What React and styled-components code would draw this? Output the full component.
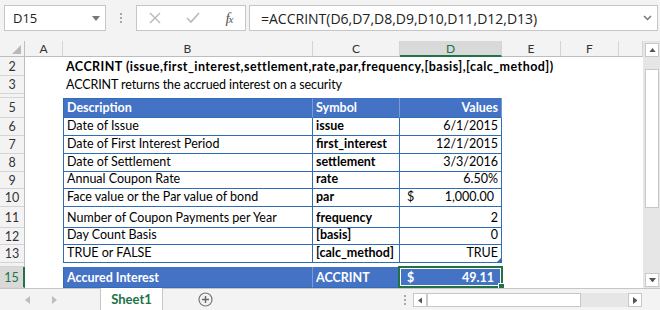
import styled, { createGlobalStyle } from 'styled-components'

const GREEN = '#217346'
const BLUE = '#4472c4'
const LINE = '#2f6db8'

const GlobalStyle = createGlobalStyle`
  html, body { margin: 0; padding: 0; background: #fff; }
  body { font-family: Lato, 'Liberation Sans', sans-serif; }
`

const Window = styled.div`
  width: 660px;
  height: 310px;
  overflow: hidden;
  display: flex;
  flex-direction: column;
  background: #f3f3f3;
`

/* ---------- formula bar ---------- */

const FormulaBar = styled.div`
  height: 41px;
  flex: none;
  display: flex;
  align-items: flex-start;
  box-sizing: border-box;
  padding: 5px 2px 0 4px;
`

const Box = styled.div`
  height: 26px;
  box-sizing: border-box;
  border: 1px solid #c6c6c6;
  background: #fff;
  display: flex;
  align-items: center;
`

const NameBox = styled(Box)`
  width: 102px;
  justify-content: space-between;
  padding: 0 5px 0 8px;
  font: 13px 'Open Sans', sans-serif;
  color: #222;
`

const Splitter = styled.div`
  width: 30px;
  height: 26px;
  display: flex;
  flex-direction: column;
  align-items: center;
  justify-content: center;
  gap: 2px;
  span {
    width: 2px;
    height: 2px;
    background: #a8a8a8;
  }
`

const FxBox = styled(Box)`
  width: 110px;
  justify-content: space-around;
`

const Fx = styled.span`
  font: italic 15px 'Liberation Serif', serif;
  color: #555;
  letter-spacing: -1px;
  sub {
    font-size: 11px;
    vertical-align: baseline;
  }
`

const FormulaInput = styled(Box)`
  flex: 1;
  margin-left: 3px;
  justify-content: space-between;
  padding: 0 5px 0 11px;
  font: 14px 'Open Sans', sans-serif;
  color: #222;
`

/* ---------- sheet ---------- */

const Body = styled.div`
  height: 247px;
  flex: none;
  display: flex;
`

const Grid = styled.div`
  width: 643px;
  display: grid;
  grid-template-columns: 25px 38px 250px 87px 102px 59px 58px 24px;
  grid-template-rows: ${(p) => p.$rows};
  background: #fff;
  overflow: hidden;
`

const Corner = styled.div`
  position: relative;
  background: #f3f3f3;
  border-right: 1px solid #bdbdbd;
  border-bottom: 1px solid #bdbdbd;
  box-sizing: border-box;
  svg {
    position: absolute;
    right: 3px;
    bottom: 2px;
  }
`

const ColHead = styled.div`
  box-sizing: border-box;
  background: ${(p) => (p.$selected ? '#d9d9d9' : '#f3f3f3')};
  border-right: 1px solid #d4d4d4;
  border-bottom: ${(p) => (p.$selected ? `2px solid ${GREEN}` : '1px solid #bdbdbd')};
  color: ${(p) => (p.$selected ? GREEN : '#333')};
  font-size: 12px;
  display: flex;
  align-items: center;
  justify-content: center;
`

const RowHead = styled.div`
  box-sizing: border-box;
  background: ${(p) => (p.$selected ? '#d9d9d9' : '#f3f3f3')};
  border-bottom: 1px solid #d4d4d4;
  border-right: ${(p) => (p.$selected ? `2px solid ${GREEN}` : '1px solid #bdbdbd')};
  color: ${(p) => (p.$selected ? GREEN : '#333')};
  font-size: 12.5px;
  display: flex;
  align-items: center;
  justify-content: center;
  overflow: hidden;
`

const Blank = styled.div``

const TextCell = styled.div`
  grid-column: span ${(p) => p.$span || 1};
  display: flex;
  align-items: flex-end;
  padding: 0 0 2px 3px;
  font-size: 12.5px;
  font-weight: ${(p) => (p.$bold ? 700 : 400)};
  letter-spacing: ${(p) => (p.$bold ? '0.45px' : '-0.1px')};
  color: #000;
  white-space: nowrap;
`

const Cell = styled.div`
  position: relative;
  box-sizing: border-box;
  display: flex;
  align-items: flex-end;
  justify-content: ${(p) => (p.$split ? 'space-between' : p.$right ? 'flex-end' : 'flex-start')};
  padding: ${(p) => (p.$split ? '0 7px 2px 7px' : '0 3px 2px 3px')};
  background: ${(p) => (p.$fill ? BLUE : '#fff')};
  color: ${(p) => (p.$fill ? '#fff' : '#000')};
  font-size: 12.5px;
  font-weight: ${(p) => (p.$bold ? 700 : 400)};
  white-space: nowrap;
  border-right: 1px solid ${(p) => (p.$fill ? '#7b9ad6' : LINE)};
  border-bottom: 1px solid ${LINE};
  border-left: ${(p) => (p.$first ? `1px solid ${LINE}` : 'none')};
  border-top: ${(p) => (p.$top ? `1px solid ${LINE}` : 'none')};
`

const Selection = styled.div`
  position: absolute;
  left: -2px;
  top: -1px;
  right: -2px;
  bottom: -1px;
  border: 2px solid ${GREEN};
  box-shadow: inset 0 0 0 1px #fff;
  pointer-events: none;
  &:after {
    content: '';
    position: absolute;
    right: -4px;
    bottom: -4px;
    width: 5px;
    height: 5px;
    background: ${GREEN};
    border: 1px solid #fff;
  }
`

const CornerMark = styled.span`
  position: absolute;
  right: 0;
  bottom: 0;
  width: 0;
  height: 0;
  border-left: 4px solid transparent;
  border-bottom: 4px solid ${LINE};
`

const VScroll = styled.div`
  width: 17px;
  flex: none;
  background: #e6e6e6;
  display: flex;
  flex-direction: column;
  align-items: flex-end;
  padding: 2px 1px 1px 0;
  box-sizing: border-box;
`

const ScrollButton = styled.div`
  width: 14px;
  height: 14px;
  box-sizing: border-box;
  background: #fff;
  border: 1px solid #c8c8c8;
  display: flex;
  align-items: center;
  justify-content: center;
  flex: none;
`

const VThumb = styled.div`
  width: 14px;
  height: 139px;
  margin-top: 12px;
  box-sizing: border-box;
  background: #fff;
  border: 1px solid #c8c8c8;
`

const Spacer = styled.div`
  flex: 1;
`

/* ---------- sheet tabs ---------- */

const TabBar = styled.div`
  height: 22px;
  flex: none;
  box-sizing: border-box;
  border-top: 1px solid #c6c6c6;
  display: flex;
  align-items: stretch;
`

const Nav = styled.div`
  width: 100px;
  display: flex;
  align-items: center;
  padding-left: 25px;
  gap: 22px;
  box-sizing: border-box;
`

const Tab = styled.div`
  width: 63px;
  margin-top: -1px;
  box-sizing: border-box;
  background: #fff;
  border-left: 1px solid #c6c6c6;
  border-right: 1px solid #c6c6c6;
  display: flex;
  align-items: center;
  justify-content: center;
  font-weight: 700;
  font-size: 13px;
  color: ${GREEN};
`

const AddSheet = styled.div`
  width: 84px;
  display: flex;
  align-items: center;
  justify-content: center;
`

const HDots = styled.div`
  margin-left: 150px;
  width: 16px;
  display: flex;
  flex-direction: column;
  align-items: center;
  justify-content: center;
  gap: 2px;
  span {
    width: 2px;
    height: 2px;
    background: #a8a8a8;
  }
`

const HScroll = styled.div`
  display: flex;
  align-items: center;
  width: 229px;
  height: 14px;
  align-self: center;
  margin-top: 1px;
  background: #e6e6e6;
`

const HThumb = styled.div`
  width: 154px;
  height: 14px;
  box-sizing: border-box;
  background: #fff;
  border: 1px solid #c8c8c8;
`

const Tri = ({ dir, color = '#666', size = 7 }) => {
  const h = size / 2
  const pts = {
    up: `0,${h + 1} ${size},${h + 1} ${h},0`,
    down: `0,0 ${size},0 ${h},${h + 1}`,
    left: `${h + 1},0 ${h + 1},${size} 0,${h}`,
    right: `0,0 0,${size} ${h + 1},${h}`,
  }[dir]
  const vertical = dir === 'up' || dir === 'down'
  return (
    <svg width={vertical ? size : h + 1} height={vertical ? h + 1 : size}>
      <polygon points={pts} fill={color} />
    </svg>
  )
}

const COLS = ['A', 'B', 'C', 'D', 'E', 'F', '']

const TABLE = [
  { n: 5, h: 20, head: true, b: 'Description', c: 'Symbol', d: 'Values' },
  { n: 6, h: 18, b: 'Date of Issue', c: 'issue', d: '6/1/2015' },
  { n: 7, h: 18, b: 'Date of First Interest Period', c: 'first_interest', d: '12/1/2015' },
  { n: 8, h: 18, b: 'Date of Settlement', c: 'settlement', d: '3/3/2016' },
  { n: 9, h: 17, b: 'Annual Coupon Rate', c: 'rate', d: '6.50%' },
  { n: 10, h: 18, b: 'Face value or the Par value of bond', c: 'par', d: '1,000.00', money: true },
  { n: 11, h: 21, b: 'Number of Coupon Payments per Year', c: 'frequency', d: '2' },
  { n: 12, h: 17, b: 'Day Count Basis', c: '[basis]', d: '0' },
  { n: 13, h: 18, b: 'TRUE or FALSE', c: '[calc_method]', d: 'TRUE', mark: true },
]

const HEIGHTS = [16, 19, 18, 4, ...TABLE.map((r) => r.h), 4, 21]

const Empty = ({ count }) => Array.from({ length: count }, (_, i) => <Blank key={i} />)

const TableRow = ({ row }) => (
  <>
    <RowHead>{row.n}</RowHead>
    <Blank />
    <Cell $first $top={row.head} $fill={row.head} $bold={row.head}>
      {row.b}
    </Cell>
    <Cell $fill={row.head} $bold>
      {row.c}
    </Cell>
    {row.money ? (
      <Cell $split>
        <span>$</span>
        <span>{row.d}</span>
      </Cell>
    ) : (
      <Cell $right $fill={row.head} $bold={row.head}>
        {row.d}
        {row.mark && <CornerMark />}
      </Cell>
    )}
    <Empty count={3} />
  </>
)

export default function App() {
  return (
    <Window>
      <GlobalStyle />
      <FormulaBar>
        <NameBox>
          D15
          <Tri dir="down" color="#777" size={8} />
        </NameBox>
        <Splitter>
          <span />
          <span />
          <span />
        </Splitter>
        <FxBox>
          <svg width="12" height="12">
            <path d="M1 1 L11 11 M11 1 L1 11" stroke="#b8b8b8" strokeWidth="1.4" />
          </svg>
          <svg width="14" height="12">
            <path d="M1 6 L5 10 L13 1" stroke="#b8b8b8" strokeWidth="1.6" fill="none" />
          </svg>
          <Fx>
            f<sub>x</sub>
          </Fx>
        </FxBox>
        <FormulaInput>
          =ACCRINT(D6,D7,D8,D9,D10,D11,D12,D13)
          <svg width="9" height="6">
            <path d="M1 1 L4.5 4.5 L8 1" stroke="#777" strokeWidth="1.5" fill="none" />
          </svg>
        </FormulaInput>
      </FormulaBar>

      <Body>
        <Grid $rows={HEIGHTS.map((h) => `${h}px`).join(' ')}>
          <Corner>
            <svg width="9" height="9">
              <polygon points="9,0 9,9 0,9" fill="#b9b9b9" />
            </svg>
          </Corner>
          {COLS.map((c, i) => (
            <ColHead key={i} $selected={c === 'D'}>
              {c}
            </ColHead>
          ))}

          <RowHead>2</RowHead>
          <Blank />
          <TextCell $span={6} $bold>
            ACCRINT (issue,first_interest,settlement,rate,par,frequency,[basis],[calc_method])
          </TextCell>

          <RowHead>3</RowHead>
          <Blank />
          <TextCell $span={6}>ACCRINT returns the accrued interest on a security</TextCell>

          <RowHead />
          <Empty count={7} />

          {TABLE.map((row) => (
            <TableRow key={row.n} row={row} />
          ))}

          <RowHead />
          <Empty count={7} />

          <RowHead $selected>15</RowHead>
          <Blank />
          <Cell $first $fill $bold>
            Accured Interest
          </Cell>
          <Cell $fill $bold>
            ACCRINT
          </Cell>
          <Cell $fill $bold $split>
            <span>$</span>
            <span>49.11</span>
            <Selection />
          </Cell>
          <Empty count={3} />
        </Grid>

        <VScroll>
          <ScrollButton>
            <Tri dir="up" color="#555" />
          </ScrollButton>
          <VThumb />
          <Spacer />
          <ScrollButton>
            <Tri dir="down" color="#555" />
          </ScrollButton>
        </VScroll>
      </Body>

      <TabBar>
        <Nav>
          <Tri dir="left" color="#bdbdbd" size={8} />
          <Tri dir="right" color="#bdbdbd" size={8} />
        </Nav>
        <Tab>Sheet1</Tab>
        <AddSheet>
          <svg width="15" height="15">
            <circle cx="7.5" cy="7.5" r="6.5" stroke="#777" strokeWidth="1.2" fill="none" />
            <path d="M7.5 4 V11 M4 7.5 H11" stroke="#666" strokeWidth="1.4" />
          </svg>
        </AddSheet>
        <HDots>
          <span />
          <span />
          <span />
        </HDots>
        <HScroll>
          <ScrollButton>
            <Tri dir="left" color="#555" />
          </ScrollButton>
          <HThumb />
          <Spacer />
          <ScrollButton>
            <Tri dir="right" color="#555" />
          </ScrollButton>
        </HScroll>
      </TabBar>
    </Window>
  )
}
